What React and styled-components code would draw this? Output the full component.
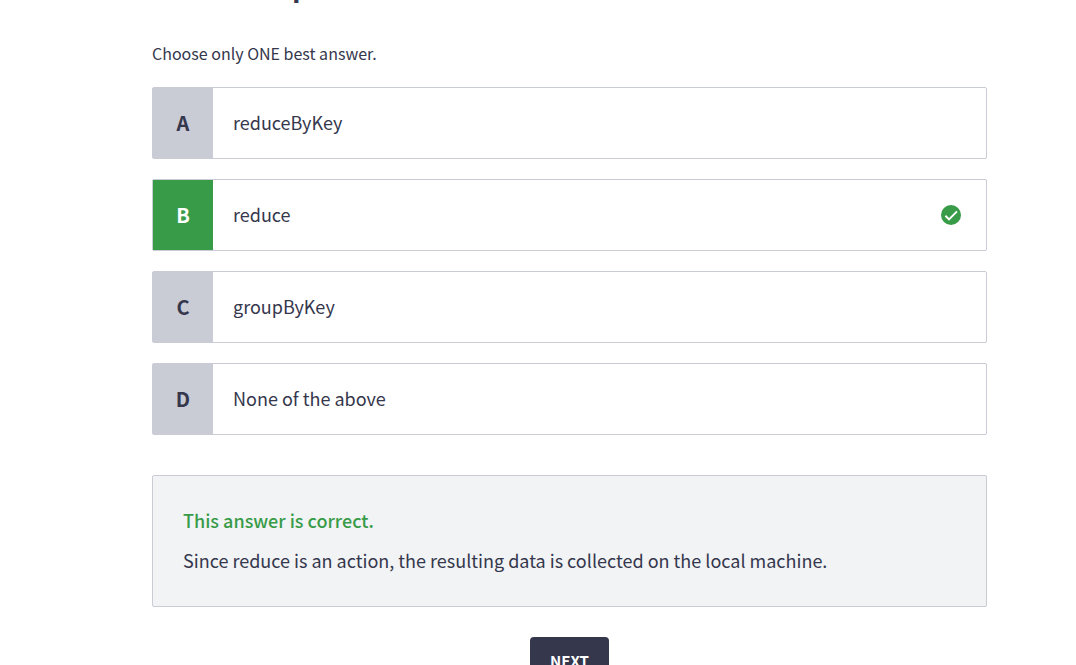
import React, { useState } from 'react';
import styled, { createGlobalStyle } from 'styled-components';

const GlobalStyle = createGlobalStyle`
  *, *::before, *::after { box-sizing: border-box; }
  body {
    margin: 0;
    background: #fff;
    color: #35374d;
    font-family: "Source Sans Pro", "Noto Sans CJK SC", "Open Sans", sans-serif;
    font-size: 18px;
    line-height: 30px;
  }
`;

const Page = styled.main`
  display: flex;
  flex-direction: column;
  padding: 0 89px 30px 152px;
`;

const Title = styled.h1`
  margin: -40px 0 0;
  padding-left: 140px;
  font-size: 28px;
  line-height: 50px;
  font-weight: 700;
`;

const Quiz = styled.form`
  display: flex;
  flex-direction: column;
`;

const Choices = styled.fieldset`
  margin: 0;
  padding: 0;
  border: 0;
  min-width: 0;
`;

const Hint = styled.legend`
  padding: 31px 0 22px;
  font-size: 16px;
  line-height: 24px;
`;

const OptionList = styled.div`
  display: flex;
  flex-direction: column;
  gap: 20px;
`;

const Option = styled.label`
  position: relative;
  display: flex;
  align-items: stretch;
  min-height: 72px;
  border: 1px solid #c9cbd5;
  border-radius: 2px;
  cursor: pointer;
`;

const Radio = styled.input`
  position: absolute;
  inset: 0;
  width: 100%;
  height: 100%;
  margin: 0;
  opacity: 0;
  cursor: pointer;
`;

const Letter = styled.span`
  flex: 0 0 60px;
  display: flex;
  align-items: center;
  justify-content: center;
  font-size: 20px;
  font-weight: 700;
  color: ${(p) => (p.$correct ? '#fff' : '#35374d')};
  background: ${(p) => (p.$correct ? '#389b48' : '#c9cbd5')};
`;

const OptionText = styled.span`
  flex: 1;
  align-self: center;
  padding: 0 20px 2px;
`;

const CheckIcon = styled.svg`
  flex: none;
  align-self: center;
  width: 20px;
  height: 20px;
  margin-right: 25px;
`;

const Explanation = styled.section`
  margin-top: 40px;
  padding: 29px 30px 31px;
  border: 1px solid #c9cbd5;
  border-radius: 2px;
  background: #f1f3f5;
`;

const Verdict = styled.h2`
  margin: 0 0 10px;
  font-size: 18px;
  line-height: 30px;
  font-weight: 500;
  color: #389b48;
`;

const Reason = styled.p`
  margin: 0;
`;

const NextButton = styled.button`
  align-self: center;
  margin-top: 30px;
  height: 48px;
  padding: 0 20px;
  border: 0;
  border-radius: 4px;
  background: #35374d;
  color: #fff;
  font-family: inherit;
  font-size: 15px;
  line-height: 24px;
  font-weight: 700;
  cursor: pointer;
`;

const options = [
  { letter: 'A', text: 'reduceByKey' },
  { letter: 'B', text: 'reduce', correct: true },
  { letter: 'C', text: 'groupByKey' },
  { letter: 'D', text: 'None of the above' },
];

export default function App() {
  const [selected, setSelected] = useState('B');
  return (
    <>
      <GlobalStyle />
      <Page>
        <Title>p</Title>
        <Quiz onSubmit={(e) => e.preventDefault()}>
          <Choices>
            <Hint>Choose only ONE best answer.</Hint>
            <OptionList>
              {options.map((o) => (
                <Option key={o.letter}>
                  <Radio
                    type="radio"
                    name="answer"
                    value={o.letter}
                    checked={selected === o.letter}
                    onChange={() => setSelected(o.letter)}
                  />
                  <Letter $correct={o.correct}>{o.letter}</Letter>
                  <OptionText>{o.text}</OptionText>
                  {o.correct && (
                    <CheckIcon viewBox="0 0 20 20" role="img" aria-label="Correct">
                      <circle cx="10" cy="10" r="10" fill="#389b48" />
                      <path
                        d="M4.4 10.8 8 14.4 16 6.4"
                        fill="none"
                        stroke="#fff"
                        strokeWidth="2"
                      />
                    </CheckIcon>
                  )}
                </Option>
              ))}
            </OptionList>
          </Choices>
          <Explanation>
            <Verdict>This answer is correct.</Verdict>
            <Reason>
              Since reduce is an action, the resulting data is collected on the local machine.
            </Reason>
          </Explanation>
          <NextButton type="submit">NEXT</NextButton>
        </Quiz>
      </Page>
    </>
  );
}
